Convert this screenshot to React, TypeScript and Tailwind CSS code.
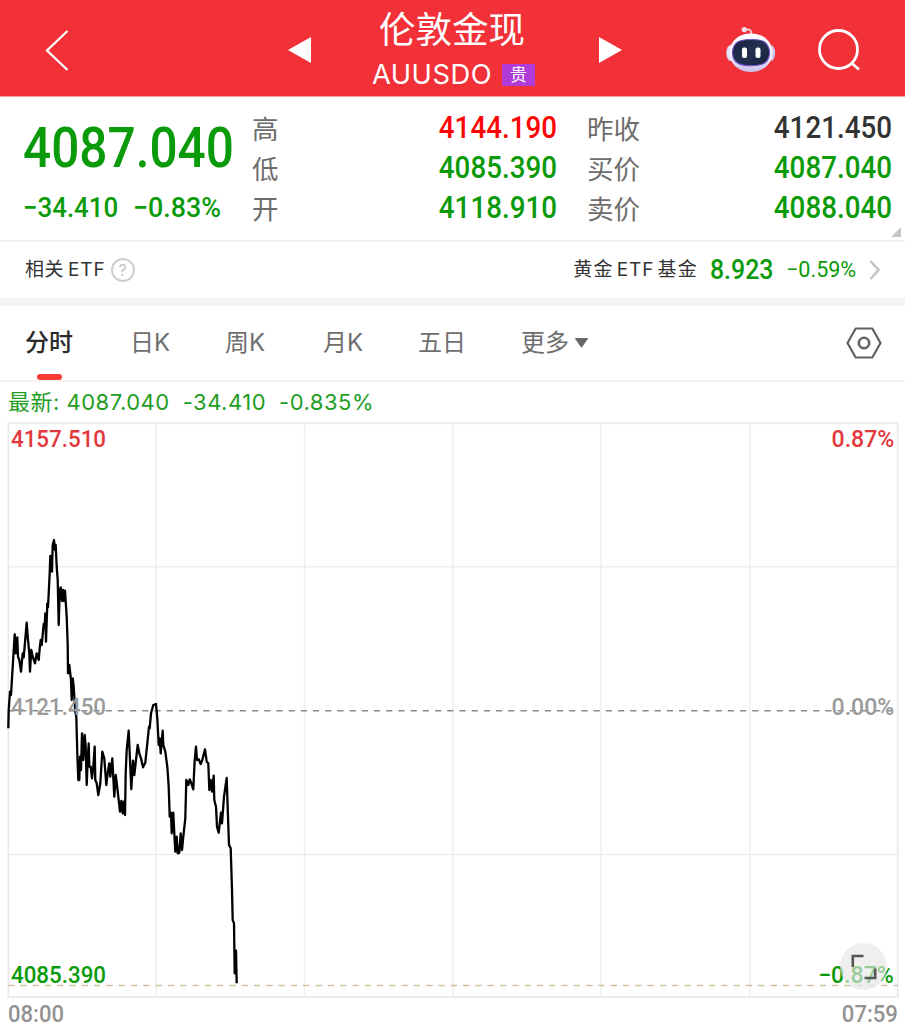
import { useState } from 'react'
import type { ReactNode } from 'react'
import clsx from 'clsx'

// ── Data ──────────────────────────────────────────────────────────────────────

type Tone = 'up' | 'down' | 'flat'

const TONE: Record<Tone, string> = {
  up: 'text-[#fd0505]',
  down: 'text-[#0a9a0a]',
  flat: 'text-[#333333]',
}

const QUOTES_LEFT: { label: string; value: string; tone: Tone }[] = [
  { label: '高', value: '4144.190', tone: 'up' },
  { label: '低', value: '4085.390', tone: 'down' },
  { label: '开', value: '4118.910', tone: 'down' },
]

const QUOTES_RIGHT: { label: string; value: string; tone: Tone }[] = [
  { label: '昨收', value: '4121.450', tone: 'flat' },
  { label: '买价', value: '4087.040', tone: 'down' },
  { label: '卖价', value: '4088.040', tone: 'down' },
]

const TABS = [
  { label: '分时', width: 'w-[105px]' },
  { label: '日K', width: 'w-[95px]' },
  { label: '周K', width: 'w-[98px]' },
  { label: '月K', width: 'w-[95px]' },
  { label: '五日', width: 'w-[103px]' },
]

// Intraday line, [x, y] in thirds of a pixel from (0, 520)
const TICKS: [number, number][] = [
  [25, 625], [26, 570], [30, 515], [33, 525], [38, 440], [44, 343], [47, 400], [52, 352], [54, 410],
  [58, 420], [63, 455], [68, 400], [71, 412], [80, 308], [83, 350], [88, 400], [90, 455], [94, 390],
  [98, 410], [105, 430], [110, 400], [116, 420], [119, 385], [122, 360], [125, 375], [131, 312],
  [134, 320], [136, 280], [138, 365], [142, 250], [144, 262], [149, 160], [151, 108], [156, 155],
  [158, 75], [162, 60], [165, 90], [167, 75], [170, 140], [173, 180], [176, 315], [179, 215],
  [182, 202], [186, 243], [189, 210], [192, 243], [195, 212], [200, 290], [203, 375], [204, 460],
  [208, 435], [213, 480], [215, 540], [218, 475], [221, 500], [226, 575], [229, 590], [232, 700],
  [235, 780], [238, 780], [240, 710], [243, 750], [246, 640], [250, 720], [254, 645], [257, 680],
  [260, 795], [263, 720], [266, 670], [268, 740], [272, 740], [276, 775], [280, 740], [284, 680],
  [286, 780], [290, 790], [295, 825], [301, 790], [307, 695], [313, 715], [319, 795], [323, 760],
  [328, 730], [331, 770], [337, 715], [343, 830], [347, 765], [351, 795], [355, 830], [360, 875],
  [364, 843], [368, 880], [371, 845], [375, 885], [377, 760], [380, 690], [386, 632], [394, 808],
  [399, 722], [403, 765], [413, 675], [418, 700], [423, 715], [429, 742], [436, 728], [442, 670],
  [447, 620], [449, 625], [453, 580], [460, 555], [468, 552], [472, 595], [476, 675], [479, 655],
  [482, 700], [488, 632], [490, 675], [496, 695], [502, 740], [506, 800], [509, 890], [513, 878],
  [515, 940], [520, 878], [523, 940], [526, 995], [530, 950], [533, 1000], [538, 998], [542, 940],
  [546, 990], [550, 950], [556, 895], [559, 780], [565, 795], [569, 778], [574, 790], [580, 808],
  [584, 720], [588, 680], [591, 720], [596, 718], [602, 732], [607, 720], [615, 688], [620, 725],
  [625, 730], [628, 810], [632, 780], [636, 815], [641, 767], [643, 840], [648, 860], [651, 920],
  [656, 938], [663, 878], [666, 910], [672, 830], [680, 774], [684, 890], [687, 975], [692, 985],
  [696, 1110], [698, 1200], [702, 1210], [704, 1360], [708, 1292], [710, 1390],
]

const LINE = TICKS.map(([x, y]) => `${(x / 3).toFixed(1)},${(y / 3 + 98).toFixed(1)}`).join(' ')

// ── Number in the narrow quote face ───────────────────────────────────────────

function Num({ className, children }: { className?: string; children: ReactNode }) {
  return (
    <span
      className={clsx(
        "inline-block whitespace-pre font-['Roboto','Noto_Sans_CJK_SC',sans-serif]",
        className,
      )}
    >
      {children}
    </span>
  )
}

// ── Header ────────────────────────────────────────────────────────────────────

function RobotIcon() {
  return (
    <svg width="52" height="48" viewBox="0 0 52 48" fill="none">
      <defs>
        <linearGradient id="shell" x1="0" y1="0" x2="0" y2="1">
          <stop offset="0" stopColor="#ffffff" />
          <stop offset="0.6" stopColor="#f1eefc" />
          <stop offset="1" stopColor="#c9bdec" />
        </linearGradient>
        <linearGradient id="visor" x1="0" y1="0" x2="1" y2="1">
          <stop offset="0" stopColor="#15233f" />
          <stop offset="0.5" stopColor="#222f50" />
          <stop offset="1" stopColor="#18213c" />
        </linearGradient>
      </defs>
      <path d="M20 4.500c5-.8 6.600.6 6.500 5" stroke="#efd6e6" strokeWidth="1.700" />
      <circle cx="19.300" cy="4.600" r="2.600" fill="#f1dfec" />
      <ellipse cx="6" cy="28" rx="4.700" ry="8" fill="#e6e0f7" />
      <ellipse cx="45.500" cy="28" rx="4.700" ry="8" fill="#cfc6ee" />
      <path
        d="M26 8.500c12.500 0 21.500 8 21.500 19S38.500 47 26 47 4.500 38.500 4.500 27.500s9-19 21.500-19Z"
        fill="url(#shell)"
      />
      <path
        d="M26 14.500c8 0 12 .7 15 3.800 2.500 2.700 3.500 5.700 3.500 9.200 0 4.500-1.300 7.500-4 9.700-3.200 2.600-7.500 3.600-14.500 3.600s-11.300-1-14.500-3.600c-2.700-2.200-4-5.200-4-9.700 0-3.500 1-6.500 3.500-9.200 3-3.100 7-3.800 15-3.800Z"
        fill="url(#visor)"
        stroke="#6d52c9"
        strokeWidth="1.100"
      />
      <rect x="17" y="22.500" width="5" height="10.500" rx="2" fill="#fff" />
      <rect x="30.500" y="22.500" width="5" height="10.500" rx="2" fill="#fff" />
    </svg>
  )
}

function Header() {
  return (
    <header className="flex h-[97px] items-start border-b border-[#f7a1a5] bg-[#f13038] text-white">
      <button type="button" aria-label="返回" className="ml-[44px] mt-[29px]">
        <svg width="26" height="43" viewBox="0 0 26 43" fill="none">
          <path d="M23.500 2 3 21.500l20.500 19.500" stroke="#fff" strokeWidth="2.300" />
        </svg>
      </button>
      <button type="button" aria-label="上一个" className="ml-[218px] mt-[37px]">
        <svg width="24" height="26" viewBox="0 0 24 26">
          <path d="M0 13 23 0v26Z" fill="#fff" />
        </svg>
      </button>

      <div className="ml-[60px] w-[165px]">
        <h1 className="mt-[8px] whitespace-nowrap pl-[7px] text-[36.500px] font-normal leading-[44px]">伦敦金现</h1>
        <div className="mt-[8px] flex items-center">
          <span className="text-[27.300px] leading-[30px] tracking-[0.500px]">AUUSDO</span>
          <span className="ml-[10px] flex h-[22px] w-[33px] items-center justify-center bg-[#b03bd9] text-[17px] leading-none">
            贵
          </span>
        </div>
      </div>

      <button type="button" aria-label="下一个" className="ml-[62px] mt-[37px]">
        <svg width="24" height="26" viewBox="0 0 24 26">
          <path d="M0 0 23 13 0 26Z" fill="#fff" />
        </svg>
      </button>
      <button type="button" aria-label="助手" className="ml-[102px] mt-[25px]">
        <RobotIcon />
      </button>
      <button type="button" aria-label="搜索" className="ml-[41px] mt-[29px]">
        <svg width="44" height="44" viewBox="0 0 44 44" fill="none" stroke="#fff" strokeWidth="2.800">
          <circle cx="20.500" cy="20.500" r="19" />
          <path d="m33.500 34 7.500 6.500" />
        </svg>
      </button>
    </header>
  )
}

// ── Quote panel ───────────────────────────────────────────────────────────────

function QuoteRow({ label, value, tone }: { label: string; value: string; tone: Tone }) {
  return (
    <div className="flex h-[40.300px] items-center justify-between">
      <span className="text-[26.500px] leading-none text-[#6d6d6d]">{label}</span>
      <Num
        className={clsx('-mt-[4px] origin-right scale-x-[0.895] text-[31px] font-medium leading-none', TONE[tone])}
      >
        {value}
      </Num>
    </div>
  )
}

function QuotePanel() {
  return (
    <section className="relative flex h-[145px] border-b-2 border-[#f1f1f1]">
      <div className="w-[252px] pl-[23px] text-[#0a9a0a]">
        <Num className="mt-[23px] origin-left scale-x-[0.885] text-[56px] font-medium leading-none">4087.040</Num>
        <div className="mt-[18px] flex whitespace-nowrap">
          <Num className="w-[110px] origin-left scale-x-[0.94] text-[27.500px] font-medium leading-none">−34.410</Num>
          <Num className="origin-left scale-x-[0.975] text-[27.500px] font-medium leading-none">−0.83%</Num>
        </div>
      </div>
      <div className="w-[305px] pt-[12px]">
        {QUOTES_LEFT.map((q) => (
          <QuoteRow key={q.label} {...q} />
        ))}
      </div>
      <div className="ml-[30px] w-[305px] pt-[12px]">
        {QUOTES_RIGHT.map((q) => (
          <QuoteRow key={q.label} {...q} />
        ))}
      </div>
      <svg className="absolute bottom-[3px] right-[4px]" width="10" height="10" viewBox="0 0 10 10">
        <path d="M10 0v10H0Z" fill="#c6c6c6" />
      </svg>
    </section>
  )
}

function EtfRow() {
  return (
    <section className="flex h-[64px] items-center border-b-8 border-[#f4f4f4] pl-[25px] pr-[24px] text-[19px] text-[#333]">
      <span className="tracking-[0.500px]">相关</span>
      <span className="ml-[4px] tracking-[0.900px]">ETF</span>
      <span className="ml-[5px] flex size-[24px] items-center justify-center rounded-full border-2 border-[#cfcfcf] text-[16px] leading-none text-[#c2c2c2]">
        ?
      </span>
      <span className="ml-auto tracking-[1.300px]">黄金</span>
      <span className="ml-[3px] tracking-[0.900px]">ETF</span>
      <span className="ml-[3px] tracking-[1.300px]">基金</span>
      <Num className="ml-[12px] w-[76px] origin-left scale-x-[0.92] text-[27px] font-medium leading-none text-[#0a9a0a]">
        8.923
      </Num>
      <Num className="w-[83px] origin-left scale-x-[0.98] text-[22px] leading-none text-[#0a9a0a]">−0.59%</Num>
      <svg width="12" height="22" viewBox="0 0 12 22" fill="none">
        <path d="m1.500 2 8 9-8 9" stroke="#c4c4c4" strokeWidth="2.600" />
      </svg>
    </section>
  )
}

// ── Period tabs ───────────────────────────────────────────────────────────────

function PeriodTabs({ active, onChange }: { active: string; onChange: (label: string) => void }) {
  return (
    <nav className="flex h-[76px] border-b-2 border-[#f2f2f2] pl-[25px] text-[24px] text-[#6e6e6e]">
      {TABS.map((t) => (
        <button
          key={t.label}
          type="button"
          onClick={() => onChange(t.label)}
          className={clsx(
            'relative whitespace-nowrap text-left',
            t.width,
            active === t.label && 'font-medium text-[#2a2a2a]',
          )}
        >
          {t.label}
          {active === t.label && (
            <span className="absolute bottom-0 left-[12px] h-[6px] w-[25px] rounded-full bg-[#f93a35]" />
          )}
        </button>
      ))}
      <button type="button" className="flex items-center">
        更多
        <svg className="ml-[6px]" width="13" height="10" viewBox="0 0 13 10">
          <path d="M.5 0h12a.5.5 0 0 1 .4.800L7 9.300a.6.6 0 0 1-1 0L.1.800A.5.5 0 0 1 .5 0Z" fill="#666" />
        </svg>
      </button>
      <button type="button" aria-label="设置" className="ml-auto mr-[23px]">
        <svg width="36" height="32" viewBox="0 0 36 32" fill="none" stroke="#626262" strokeWidth="2.200">
          <path d="M9.700 1.500h16.600L34.500 16l-8.200 14.500H9.700L1.500 16Z" strokeLinejoin="round" />
          <circle cx="18" cy="16" r="5.200" strokeWidth="2.600" />
        </svg>
      </button>
    </nav>
  )
}

// ── Intraday chart ────────────────────────────────────────────────────────────

const AXIS_LEFT = 'absolute left-[11px] origin-left scale-x-[0.93] text-[24px] font-medium leading-none'
const AXIS_RIGHT = 'absolute right-[11px] origin-right scale-x-[0.96] text-[24px] font-medium leading-none'

function Chart() {
  return (
    <section className="relative h-[602px]">
      {/* origin of the drawing is (0, 422) on the page */}
      <svg className="block" width="905" height="576" viewBox="0 0 905 576" fill="none">
        <g stroke="#efefef" strokeWidth="1.500">
          <path d="M156 1v574M304.500 1v574M453 1v574M601 1v574M750 1v574M8 144.700h890M8 432.500h890" />
          <rect x="8.300" y="1.300" width="889.400" height="573.700" stroke="#e9e9e9" strokeWidth="1.800" />
        </g>
        <path d="M8 563.500h890" stroke="#d3c3a2" strokeWidth="1.400" strokeDasharray="6.200 6.100" />
        <path d="M8 288.700h890" stroke="#8a8a8a" strokeWidth="1.400" strokeDasharray="6.200 6" />
        <polyline points={LINE} stroke="#000" strokeWidth="2.300" strokeLinejoin="round" />
      </svg>
      <Num className={clsx(AXIS_LEFT, 'top-[5px] text-[#e3383c]')}>4157.510</Num>
      <Num className={clsx(AXIS_RIGHT, 'top-[5px] text-[#e3383c]')}>0.87%</Num>
      <Num className={clsx(AXIS_LEFT, 'top-[273px] text-[#9b9b9b]')}>4121.450</Num>
      <Num className={clsx(AXIS_RIGHT, 'top-[273px] text-[#9b9b9b]')}>0.00%</Num>
      <Num className={clsx(AXIS_LEFT, 'top-[541px] text-[#0a9a0a]')}>4085.390</Num>
      <Num className={clsx(AXIS_RIGHT, 'top-[541px] text-[#0a9a0a]')}>−0.87%</Num>
      <button
        type="button"
        aria-label="全屏"
        className="absolute left-[840px] top-[521px] flex size-[47px] items-center justify-center rounded-full bg-[#e6e6e6]/65"
      >
        <svg width="26" height="26" viewBox="0 0 26 26" fill="none" stroke="#555" strokeWidth="2.600">
          <path d="M1.800 13V2h10.700M24.200 14.500v9.500H13.500" />
        </svg>
      </button>
      <div className="flex justify-between pl-[8px] pr-[7px] pt-[6px] text-[#929292]">
        <Num className="origin-left scale-x-[0.92] text-[24px] font-medium leading-[20px]">08:00</Num>
        <Num className="origin-right scale-x-[0.92] text-[24px] font-medium leading-[20px]">07:59</Num>
      </div>
    </section>
  )
}

// ── Page ──────────────────────────────────────────────────────────────────────

export default function App() {
  const [period, setPeriod] = useState('分时')

  return (
    <main className="h-[1024px] w-[905px] overflow-hidden bg-white font-['Inter','Noto_Sans_CJK_SC',sans-serif]">
      <Header />
      <QuotePanel />
      <EtfRow />
      <PeriodTabs active={period} onChange={setPeriod} />
      <div className="flex h-[40px] items-center gap-[13px] whitespace-nowrap pl-[8px] text-[22px] tracking-[0.500px] text-[#1f9d1f]">
        <span>最新: 4087.040</span>
        <span>-34.410</span>
        <span>-0.835%</span>
      </div>
      <Chart />
    </main>
  )
}
